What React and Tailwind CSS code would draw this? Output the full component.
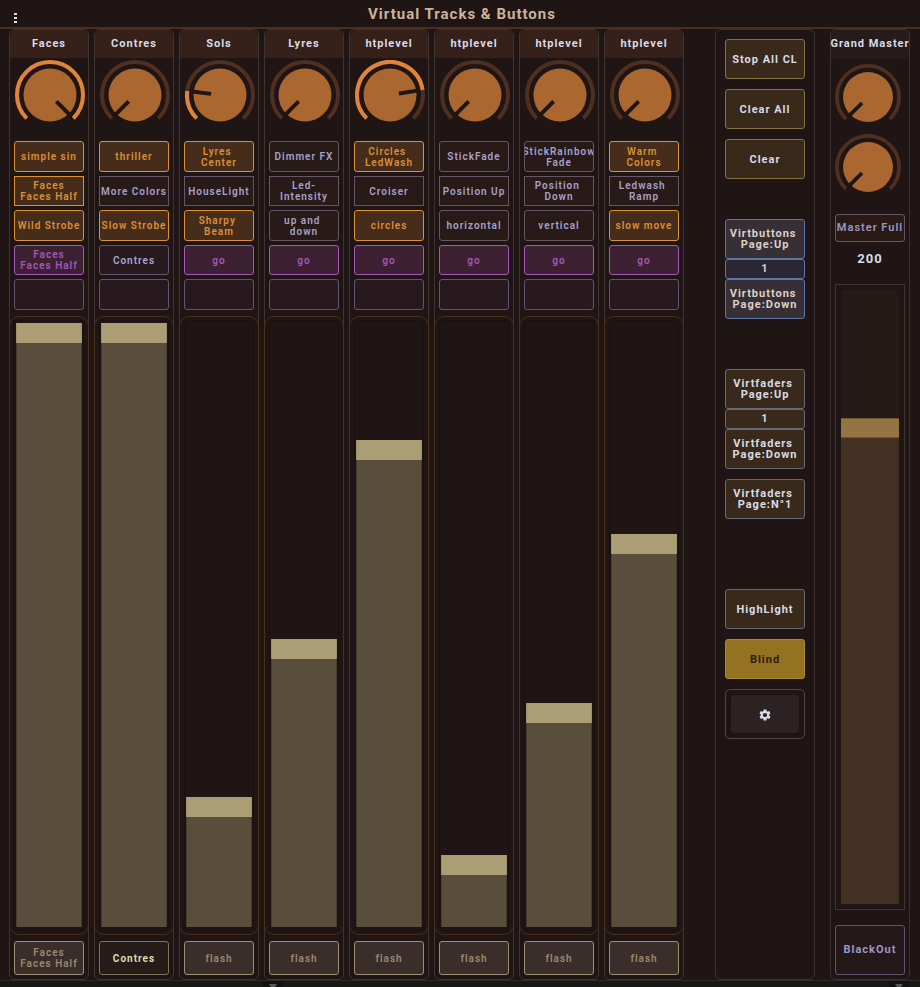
import { useState } from "react";
import { MdSettings } from "react-icons/md";

const PAD_STYLES = {
  on: "border-[#e0912f] bg-[#462d1b] text-[#dc8f33]",
  off: "border-[#675766] bg-[#271a17] text-[#a7a0ca]",
  go: "border-[#a557ba] bg-[#3d2132] text-[#a557b5]",
  idle: "border-[#625573] bg-[#27191d] text-[#a7a5d0]",
};

const GO = ["go", "go"];

const TRACKS = [
  {
    name: "Faces",
    knob: 1,
    level: 1,
    pads: [["simple sin", "on"], ["Faces\nFaces Half", "on"], ["Wild Strobe", "on"], ["Faces\nFaces Half", "go"]],
    flash: "Faces\nFaces Half",
  },
  {
    name: "Contres",
    knob: 0,
    level: 1,
    pads: [["thriller", "on"], ["More Colors", "off"], ["Slow Strobe", "on"], ["Contres", "idle"]],
    flash: "Contres",
    lit: true,
  },
  {
    name: "Sols",
    knob: 0.193,
    level: 0.189,
    pads: [["Lyres \nCenter", "on"], ["HouseLight", "off"], ["Sharpy \nBeam", "on"], GO],
    flash: "flash",
  },
  {
    name: "Lyres",
    knob: 0,
    level: 0.459,
    pads: [["Dimmer FX", "off"], ["Led-\nIntensity", "off"], ["up and \ndown", "off"], GO],
    flash: "flash",
  },
  {
    name: "htplevel",
    knob: 0.8,
    level: 0.8,
    pads: [["Circles \nLedWash", "on"], ["Croiser", "off"], ["circles", "on"], GO],
    flash: "flash",
  },
  {
    name: "htplevel",
    knob: 0,
    level: 0.089,
    pads: [["StickFade", "off"], ["Position Up", "off"], ["horizontal", "off"], GO],
    flash: "flash",
  },
  {
    name: "htplevel",
    knob: 0,
    level: 0.349,
    pads: [["StickRainbow\nFade", "off"], ["Position \nDown", "off"], ["vertical", "off"], GO],
    flash: "flash",
  },
  {
    name: "htplevel",
    knob: 0,
    level: 0.639,
    pads: [["Warm \nColors", "on"], ["Ledwash \nRamp", "off"], ["slow move", "on"], GO],
    flash: "flash",
  },
];

// Point on a circle around the knob centre; 0 is the lower left stop, 1 the lower right one.
function dialPoint(value, radius) {
  const angle = ((135 + value * 270) * Math.PI) / 180;
  return [35 + radius * Math.cos(angle), 35 + radius * Math.sin(angle)];
}

function dialArc(value) {
  const [x0, y0] = dialPoint(0, 33);
  const [x1, y1] = dialPoint(value, 33);
  return `M${x0} ${y0}A33 33 0 ${value * 270 > 180 ? 1 : 0} 1 ${x1} ${y1}`;
}

function Knob({ label, initial, size }) {
  const [value, setValue] = useState(initial);
  const [ax, ay] = dialPoint(value, 9);
  const [bx, by] = dialPoint(value, 28);
  return (
    <label className={`relative block shrink-0 ${size}`}>
      <svg viewBox="0 0 70 70" className="block size-full" fill="none" aria-hidden="true">
        <path d={dialArc(1)} stroke="#4f2f1f" strokeWidth="4" />
        {value > 0 && <path d={dialArc(value)} stroke="#df8439" strokeWidth="4" />}
        <circle cx="35" cy="35" r="26.5" fill="#ab6730" />
        <path d={`M${ax} ${ay}L${bx} ${by}`} stroke="#1f1514" strokeWidth="4" />
      </svg>
      <input
        type="range"
        min="0"
        max="1"
        step="0.001"
        value={value}
        aria-label={label}
        onChange={(e) => setValue(Number(e.target.value))}
        className="absolute inset-0 size-full cursor-pointer opacity-0"
      />
    </label>
  );
}

function Fader({ label, initial, fill, handle, groove }) {
  const [value, setValue] = useState(initial);
  return (
    <label className={`relative flex flex-1 flex-col ${groove}`}>
      <span className="basis-0" style={{ flexGrow: 1 - value }} />
      <span className={`h-5 shrink-0 ${handle}`} />
      <span className={`basis-0 ${fill}`} style={{ flexGrow: value }} />
      <input
        type="range"
        min="0"
        max="1"
        step="0.001"
        value={value}
        aria-label={label}
        onChange={(e) => setValue(Number(e.target.value))}
        className="absolute inset-0 size-full cursor-pointer opacity-0 [direction:rtl] [writing-mode:vertical-lr]"
      />
    </label>
  );
}

function Pad({ text, kind, square }) {
  return (
    <button
      type="button"
      aria-label={text ? undefined : "Empty pad"}
      className={`flex items-center justify-center overflow-hidden border text-center text-[10px] leading-[11px] font-semibold tracking-[1px] whitespace-pre ${square ? "" : "rounded-[3px]"} ${PAD_STYLES[kind]}`}
    >
      {text}
    </button>
  );
}

function Track({ track, index }) {
  const id = `${track.name} ${index + 1}`;
  return (
    <section className="flex min-w-0 flex-col rounded-md border border-[#40342f]">
      <h2 className="flex h-7 items-center justify-center rounded-t-md bg-[#35201a] text-[11px] font-bold tracking-[1px] text-[#d9dbe6]">
        {track.name}
      </h2>
      <div className="flex justify-center pt-0.5 pl-0.5">
        <Knob label={`${id} knob`} initial={track.knob} size="size-[70px]" />
      </div>
      <div className="mx-1 mt-[11px] grid grid-rows-[31px_30px_31px_30px_31px] gap-1">
        {track.pads.map(([text, kind], i) => (
          <Pad key={i} text={text} kind={kind} square={i === 1} />
        ))}
        <Pad text="" kind="idle" />
      </div>
      <div className="-mx-px mt-1.5 flex flex-1 rounded-[10px] border border-[#4a3018] px-1 py-[3px]">
        <div className="flex flex-1 rounded-sm border border-[#1a100f] px-px pt-0.5 pb-[3px]">
          <Fader
            label={`${id} level`}
            initial={track.level}
            groove="min-h-[120px]"
            handle="border-x border-[#9c8f69] bg-[#ac9e74]"
            fill="border-x border-[#463b2f] bg-[#594d3b]"
          />
        </div>
      </div>
      <button
        type="button"
        className={`mx-1 mt-1.5 mb-1 flex h-[34px] items-center justify-center rounded-[3px] border text-center text-[10px] leading-[11px] tracking-[1px] whitespace-pre ${
          track.lit
            ? "border-[#7c7656] bg-[#251b19] font-bold text-[#dedcae]"
            : "border-[#9f8f72] bg-[#3a2e2a] font-semibold text-[#9a8970]"
        }`}
      >
        {track.flash}
      </button>
    </section>
  );
}

const SIDE_STYLES = {
  gold: "border-[#86733f] bg-[#38291a] text-[#d9dbe6]",
  steel: "border-[#656b75] bg-[#38291a] text-[#d9dbe6]",
  blue: "border-[#5b76a6] bg-[#372f36] text-[#ddd0c4]",
  blind: "border-[#a8893a] bg-[#937221] text-[#2c1c12]",
};

function SideButton({ text, kind }) {
  return (
    <button
      type="button"
      className={`flex h-10 items-center justify-center rounded-[3px] border text-center text-[11px] leading-[11px] font-bold tracking-[1px] whitespace-pre ${SIDE_STYLES[kind]}`}
    >
      {text}
    </button>
  );
}

function Pager({ name, kind, outputClass }) {
  return (
    <div className="flex flex-col">
      <SideButton text={`${name} \nPage:Up`} kind={kind} />
      <output
        className={`flex h-5 items-center justify-center rounded-[3px] border text-[11px] font-bold tracking-[1px] ${outputClass}`}
      >
        1
      </output>
      <SideButton text={`${name} \nPage:Down`} kind={kind} />
    </div>
  );
}

function SidePanel() {
  return (
    <aside className="ml-[31px] flex w-[100px] shrink-0 flex-col rounded-md border border-[#3b312e] px-[9px] pt-[9px]">
      <div className="flex flex-col gap-2.5">
        <SideButton text="Stop All CL" kind="gold" />
        <SideButton text="Clear All" kind="gold" />
        <SideButton text="Clear" kind="gold" />
      </div>
      <div className="mt-10">
        <Pager name="Virtbuttons" kind="blue" outputClass="border-[#5b76a6] bg-[#2b2732] text-[#ddd0c4]" />
      </div>
      <div className="mt-[50px] flex flex-col gap-2.5">
        <Pager name="Virtfaders" kind="steel" outputClass="border-[#656b75] bg-[#38291a] text-[#d9dbe6]" />
        <SideButton text={"Virtfaders \nPage:N°1"} kind="steel" />
      </div>
      <div className="mt-[70px] flex flex-col gap-2.5">
        <SideButton text="HighLight" kind="steel" />
        <SideButton text="Blind" kind="blind" />
        <div className="flex h-[50px] rounded-[5px] border border-[#504848] p-[5px]">
          <button
            type="button"
            aria-label="Settings"
            className="flex flex-1 items-center justify-center rounded bg-[#2d2324] pt-0.5 pr-px text-[#d8dbe8]"
          >
            <MdSettings size={14} />
          </button>
        </div>
      </div>
    </aside>
  );
}

function GrandMaster() {
  return (
    <section className="ml-[15px] flex w-20 shrink-0 flex-col rounded-md border border-[#3b312e]">
      <h2 className="flex h-[29px] items-center justify-center rounded-t-md bg-[#261c1b] text-[11px] font-bold tracking-[1px] whitespace-nowrap text-[#d9dbe6]">
        Grand Master
      </h2>
      <div className="mx-1 mt-[5px] flex flex-col gap-1">
        <Knob label="Grand master knob 1" initial={0} size="size-[66px]" />
        <Knob label="Grand master knob 2" initial={0} size="size-[66px]" />
      </div>
      <button
        type="button"
        className="mx-1 mt-3.5 flex h-7 items-center justify-center rounded-[3px] border border-[#675766] bg-[#291a16] text-[11px] font-semibold tracking-[1px] whitespace-nowrap text-[#9d97c4]"
      >
        Master Full
      </button>
      <output className="mt-[7px] mb-px text-center text-[13px] leading-5 font-bold tracking-[1px] text-[#d9dbe6]">
        200
      </output>
      <div className="mx-1 mt-3.5 flex flex-1 border border-[#40342f] p-[5px]">
        <Fader
          label="Grand master level"
          initial={0.784}
          groove="bg-[#261a16]"
          handle="border-y border-[#715731] bg-[#937443]"
          fill="bg-[#433022]"
        />
      </div>
      <button
        type="button"
        className="mx-1 mt-[15px] mb-1 flex h-[50px] items-center justify-center rounded-[3px] border border-[#625573] bg-[#241818] text-[11px] font-bold tracking-[1px] text-[#9d97c4]"
      >
        BlackOut
      </button>
    </section>
  );
}

function DownArrow() {
  return (
    <span className="flex w-5 items-start justify-center bg-[#121111] pt-[3px]">
      <svg width="8" height="6" viewBox="0 0 8 6" fill="#5a5857" aria-hidden="true">
        <path d="M0 0h8L4 6z" />
      </svg>
    </span>
  );
}

export default function App() {
  return (
    <div className="flex min-h-screen flex-col bg-[#1f1514] font-[Roboto,'Liberation_Sans',sans-serif]">
      <header className="grid h-[29px] shrink-0 grid-cols-[1fr_auto_1fr] items-center border-b-2 border-[#4a2d1d]">
        <button type="button" aria-label="Menu" className="mt-2 ml-3 flex size-4 items-center justify-self-start pl-0.5">
          <svg width="3" height="10" viewBox="0 0 3 10" fill="#d5e2e6" aria-hidden="true">
            <path d="M0 0h3v2H0zM0 4h3v2H0zM0 8h3v2H0z" />
          </svg>
        </button>
        <h1 className="pl-1 text-[15px] leading-5 font-bold tracking-[1px] text-[#ccb299]">
          Virtual Tracks &amp; Buttons
        </h1>
      </header>
      <main className="flex flex-1 pr-2.5 pl-[9px]">
        <div className="grid flex-1 grid-cols-8 gap-[5px]">
          {TRACKS.map((track, i) => (
            <Track key={i} track={track} index={i} />
          ))}
        </div>
        <SidePanel />
        <GrandMaster />
      </main>
      <footer className="flex h-[7px] shrink-0 justify-between overflow-hidden border-t border-[#2e2a29] bg-[#191817] pr-[11px] pl-[263px]">
        <DownArrow />
        <DownArrow />
      </footer>
    </div>
  );
}
